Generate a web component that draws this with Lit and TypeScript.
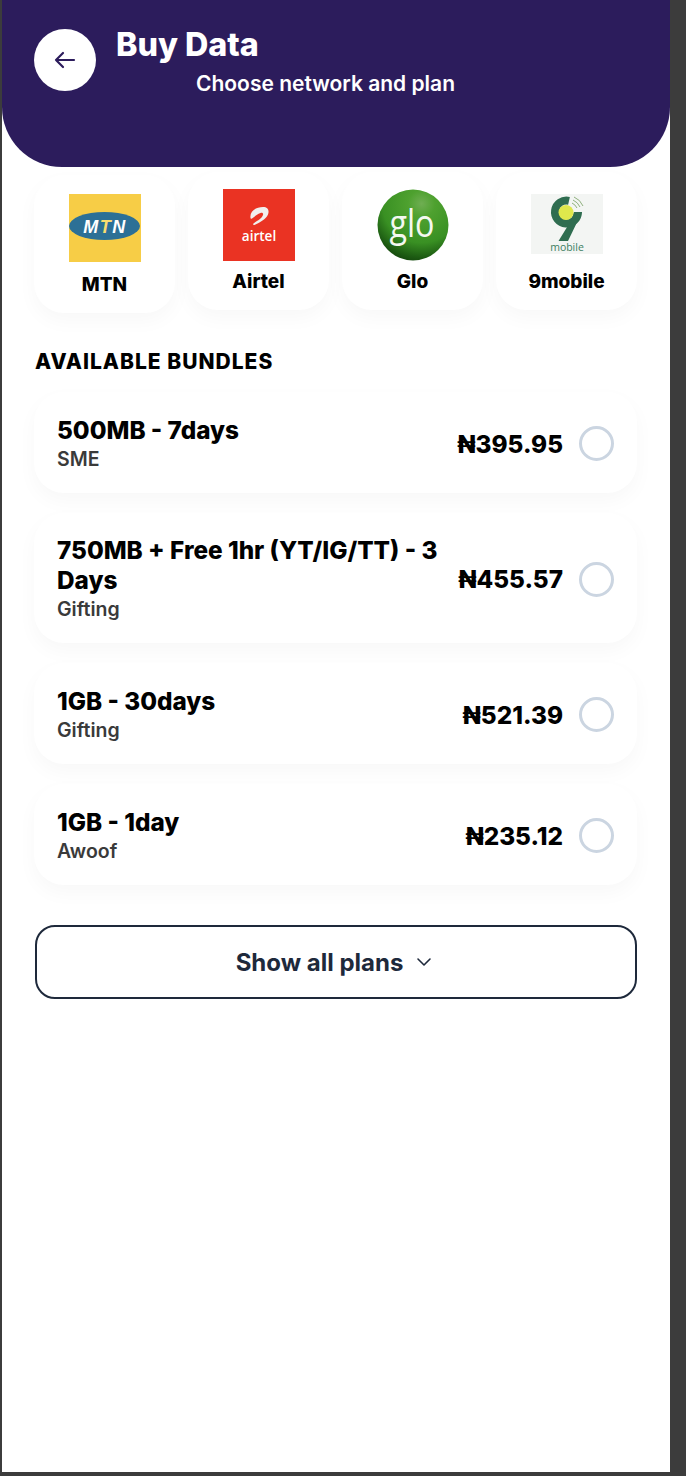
import { LitElement, html, css, svg } from "lit";
import { customElement } from "lit/decorators.js";

const mtn = svg`<svg class="logo" width="72" height="68" viewBox="0 0 72 68">
  <rect width="72" height="68" fill="#f7cd46"/>
  <ellipse cx="35.5" cy="32" rx="35.5" ry="14" fill="#2c7096"/>
  <text x="36" y="38.500" text-anchor="middle" font-family="Liberation Sans" font-weight="700" font-style="italic" font-size="18" fill="#fff" letter-spacing="1.500">M<tspan fill="#f9dd70">T</tspan>N</text>
</svg>`;

const airtel = svg`<svg class="logo" width="72" height="72" viewBox="0 0 72 72">
  <rect width="72" height="72" fill="#ea3323"/>
  <path d="M27.500 29 C26.500 22 33 18 40 18 C45 18 46.500 21.500 45 25.500 C43 30 37 33.500 31.500 36 C30 36.500 29.500 35 31 34 C35 31.500 39 29 40 26 C40.500 24.500 39.500 23.500 37.500 24 C34 25 32 27.500 29 29.500 C28 30 27.500 29.500 27.500 29 Z" fill="#f1efee"/>
  <text x="36" y="52" text-anchor="middle" font-family="Open Sans" font-weight="600" font-size="13.500" fill="#fff">airtel</text>
</svg>`;

const glo = svg`<svg class="logo" width="72" height="72" viewBox="0 0 72 72">
  <defs>
    <radialGradient id="gg" cx="0.62" cy="0.2" r="0.95">
      <stop offset="0" stop-color="#6fae52"/>
      <stop offset="0.2" stop-color="#4ea12f"/>
      <stop offset="0.58" stop-color="#399023"/>
      <stop offset="0.8" stop-color="#1c5a12"/>
      <stop offset="1" stop-color="#0b2a06"/>
    </radialGradient>
  </defs>
  <circle cx="36" cy="36" r="35.500" fill="url(#gg)"/>
  <text x="35" y="48" text-anchor="middle" font-family="Open Sans" font-weight="400" font-size="39" textLength="45" lengthAdjust="spacingAndGlyphs" fill="#f4f8f0">glo</text>
</svg>`;

const nine = svg`<svg class="logo" width="72" height="60" viewBox="0 0 72 60">
  <rect width="72" height="60" fill="#f3f5f3"/>
  <path d="M38 6.800 A11.500 11.500 0 1 0 47 18" fill="none" stroke="#2f6d50" stroke-width="8"/>
  <path d="M43 18 L51 18 L37 47 L27.500 47 L41 25 Z" fill="#2f6d50"/>
  <circle cx="35" cy="18.500" r="7.500" fill="#dfe84c"/>
  <path d="M41 9 A11 11 0 0 1 46 14 M42 6 A14 14 0 0 1 49 13 M43 3 A17 17 0 0 1 52 12" fill="none" stroke="#8fb07e" stroke-width="1"/>
  <text x="36" y="57" text-anchor="middle" font-family="Open Sans" font-weight="400" font-size="10.500" fill="#3d8063">mobile</text>
</svg>`;

const networks = [
  { name: "MTN", logo: mtn, cls: "card mtn" },
  { name: "Airtel", logo: airtel, cls: "card" },
  { name: "Glo", logo: glo, cls: "card" },
  { name: "9mobile", logo: nine, cls: "card nine" },
];

const plans = [
  { name: "500MB - 7days", type: "SME", price: "₦395.95" },
  { name: "750MB + Free 1hr (YT/IG/TT) - 3 Days", type: "Gifting", price: "₦455.57" },
  { name: "1GB - 30days", type: "Gifting", price: "₦521.39" },
  { name: "1GB - 1day", type: "Awoof", price: "₦235.12" },
];

@customElement("app-root")
export class AppRoot extends LitElement {
  static styles = css`
    :host {
      display: block;
      height: 1476px;
      box-sizing: border-box;
      background: #3c3c3c;
      padding: 0 16px 4px 2px;
      font-family: Inter, "Liberation Sans", sans-serif;
      color: #000;
    }
    .frame {
      height: 100%;
      background: #fff;
      overflow: hidden;
    }
    .header {
      height: 167px;
      box-sizing: border-box;
      background: #2c1c5c;
      border-radius: 0 0 60px 60px;
      padding: 29px 0 0 32px;
      display: flex;
      gap: 19px;
      color: #fff;
    }
    .back {
      width: 62px;
      height: 62px;
      border-radius: 50%;
      background: #fff;
      display: flex;
      align-items: center;
      justify-content: center;
      flex: none;
    }
    h1 {
      margin: -3px 0 0 1px;
      font-size: 32.300px;
      line-height: 38px;
      font-weight: 800;
    }
    .sub {
      margin: 7px 0 0 81px;
      font-size: 21px;
      line-height: 26px;
      font-weight: 600;
    }
    .networks {
      display: flex;
      gap: 13px;
      margin: 5px 0 0 32px;
      align-items: flex-start;
    }
    .card {
      width: 141px;
      height: 138px;
      flex: none;
      box-sizing: border-box;
      padding-top: 17px;
      border-radius: 30px;
      background: #fff;
      box-shadow: 0 8px 20px rgba(0, 0, 0, 0.03);
      display: flex;
      flex-direction: column;
      align-items: center;
      font-size: 19px;
      line-height: 24px;
      font-weight: 800;
    }
    .card.mtn {
      margin-top: 3px;
      padding-top: 19px;
    }
    .card.nine {
      padding-top: 22px;
    }
    .logo {
      display: block;
      flex: none;
    }
    .label {
      margin-top: 8.500px;
    }
    .mtn .label {
      margin-top: 11px;
    }
    .nine .label {
      margin-top: 16px;
    }
    h2 {
      margin: 36px 0 0 33px;
      font-size: 21px;
      line-height: 26px;
      font-weight: 800;
      letter-spacing: 1px;
    }
    .plans {
      margin: 17px 33px 0 32px;
      display: flex;
      flex-direction: column;
      gap: 20px;
    }
    .plan {
      box-sizing: border-box;
      min-height: 101px;
      padding: 22px 23px 20px;
      border-radius: 30px;
      background: #fff;
      box-shadow: 0 8px 20px rgba(0, 0, 0, 0.03);
      display: flex;
      align-items: center;
      gap: 16px;
    }
    .info {
      flex: 1;
      min-width: 0;
    }
    .name {
      font-size: 24.300px;
      line-height: 30px;
      font-weight: 800;
    }
    .type {
      font-size: 19.500px;
      line-height: 28px;
      font-weight: 600;
      color: #3a3a3a;
    }
    .price {
      font-size: 24.300px;
      line-height: 30px;
      font-weight: 800;
      flex: none;
    }
    .radio {
      width: 35px;
      height: 35px;
      box-sizing: border-box;
      border: 3px solid #cbd5e1;
      border-radius: 50%;
      flex: none;
    }
    .more {
      margin: 40px 33px 0 33px;
      height: 74px;
      box-sizing: border-box;
      border: 2px solid #1e293b;
      border-radius: 20px;
      padding-right: 4px;
      display: flex;
      align-items: center;
      justify-content: center;
      gap: 13px;
      color: #1e293b;
      font-size: 24px;
      font-weight: 700;
    }
  `;

  render() {
    return html`
      <div class="frame">
        <div class="header">
          <div class="back">
            <svg width="24" height="24" viewBox="0 0 24 24" fill="none" stroke="#2c1c5c" stroke-width="2.200" stroke-linecap="round" stroke-linejoin="round">
              <path d="M21 12H3M10 5l-7 7 7 7" />
            </svg>
          </div>
          <div>
            <h1>Buy Data</h1>
            <div class="sub">Choose network and plan</div>
          </div>
        </div>
        <div class="networks">
          ${networks.map(
            (n) => html`<div class=${n.cls}>${n.logo}<div class="label">${n.name}</div></div>`
          )}
        </div>
        <h2>AVAILABLE BUNDLES</h2>
        <div class="plans">
          ${plans.map(
            (p) => html`<div class="plan">
              <div class="info">
                <div class="name">${p.name}</div>
                <div class="type">${p.type}</div>
              </div>
              <div class="price">${p.price}</div>
              <div class="radio"></div>
            </div>`
          )}
        </div>
        <div class="more">
          <span>Show all plans</span>
          <svg width="16" height="16" viewBox="0 0 16 16" fill="none" stroke="#1e293b" stroke-width="1.600" stroke-linecap="round" stroke-linejoin="round">
            <path d="M2 5l6 6 6-6" />
          </svg>
        </div>
      </div>
    `;
  }
}
